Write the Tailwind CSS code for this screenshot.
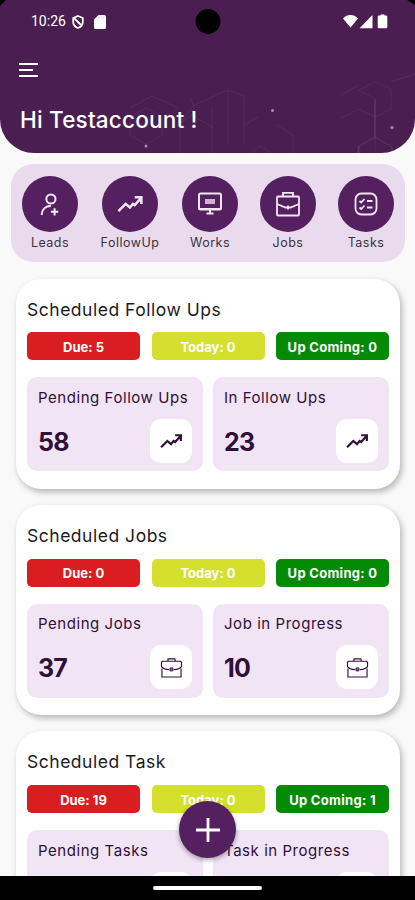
<!DOCTYPE html>
<html lang="en">
<head>
<meta charset="utf-8">
<meta name="viewport" content="width=device-width, initial-scale=1">
<title>Dashboard</title>
<script src="https://cdn.jsdelivr.net/npm/@tailwindcss/browser@4"></script>
</head>
<body class="bg-black font-['Inter',sans-serif]">
<svg class="hidden">
  <symbol id="trend" viewBox="0 0 24 24"><path d="M2 17.500 8 11.500l3.500 3 2.500-3 1.500 1L20.500 7M15.500 6H21v5.500" fill="none" stroke="currentColor" stroke-width="2.100"/></symbol>
  <symbol id="case" viewBox="0 0 24 22"><path d="M2 12v9h20v-9M9.500 13.200C6 13 3 12 1.500 10V5.500l1-1h19l1 1V10c-1.500 2-4.500 3-8 3.200M8 4.500l.5-2.500h7l.5 2.500" fill="none" stroke="currentColor" stroke-width="1.200"/><path d="M10.500 11.500h3v3h-3z" fill="#8d8094" stroke="currentColor"/></symbol>
</svg>
<div class="relative flex h-[900px] w-[415px] flex-col overflow-hidden bg-[#f9f9f9]">
  <header class="relative h-[153px] shrink-0 overflow-hidden rounded-b-[34px] bg-[#4b1e52] text-white">
    <svg class="absolute inset-0" width="415" height="153" fill="none" stroke="#9a6da0" stroke-opacity=".16">
      <path d="M0 0h6L0 6zM415 0h-8l8 5z" fill="#000" stroke="none"/>
      <path d="M130 132v-15l16-9 16 9v18l-16 9-16-9zM130 108l22-12 26 12M180 153v-30l12-8 20 12v26M180 123l14-18 34-15 16 6v47M228 90v54M212 108v20M244 125l14-8M190 97l4 9M277 125l16 10v18M341 118l18-9 16 8v36M375 99v18l16-8V89l-16-7-16 8zM251 153l9-7 11 7M341 95l18-10M391 82l24-8"/>
      <path d="M359 153v-6M375 137l-17 10v6M375 137l17 10v6M375 137v-38" stroke-opacity=".3"/>
      <g fill="#a888ac" stroke="none"><circle cx="146" cy="146" r="1.500"/><circle cx="272.500" cy="110.500" r="1.500"/><circle cx="392" cy="127.500" r="1.500"/></g>
    </svg>
    <div class="relative flex h-[43px] items-center pl-[31px] pr-[27px]">
      <span class="w-[36px] whitespace-nowrap font-['Roboto',sans-serif] text-[14px] font-normal">10:26</span>
      <svg class="ml-[5px]" width="12" height="14" viewBox="0 0 12 14" fill="none" stroke="white" stroke-width="1.800"><path d="M6 1l4.800 2v4c0 3-2 5-4.800 6-2.800-1-4.800-3-4.800-6V3zM2.500 3.500l7 7"/></svg>
      <svg class="ml-[10px]" width="12" height="14" viewBox="0 0 12 14"><path d="M4.500 0H10a2 2 0 0 1 2 2v10.500a1.500 1.500 0 0 1-1.500 1.500h-9A1.500 1.500 0 0 1 0 12.500V4.500z" fill="white"/><path d="M5 1.500v2M7.300 1.500v2M9.600 1.500v2" stroke="#d6c9d8"/></svg>
      <svg class="ml-auto" width="46" height="15" viewBox="0 0 46 15" fill="white"><path d="M1 4.500C5-.1 12-.1 16 4.500L8.500 13.500zM17.500 14.200 30.500 1v13.200zM38.500 1.500V.5h4v1h1.500a1.300 1.300 0 0 1 1.300 1.300v10.100a1.300 1.300 0 0 1-1.300 1.300h-7a1.300 1.300 0 0 1-1.300-1.300V2.800A1.300 1.300 0 0 1 37 1.500z"/></svg>
    </div>
    <div class="absolute left-1/2 top-[9px] size-[25px] -translate-x-1/2 rounded-full bg-black"></div>
    <div class="relative flex flex-col gap-[4px] pl-[19px] pt-[20px]">
      <i class="h-[2px] w-[19px] bg-white"></i><i class="h-[2px] w-[14px] bg-white"></i><i class="h-[2px] w-[19px] bg-white"></i>
    </div>
    <h1 class="relative whitespace-nowrap pl-[20px] pt-[27px] text-[22.500px] font-medium leading-[32px] tracking-[0.200px]">Hi Testaccount !</h1>
  </header>

  <nav class="ml-[11px] mt-[11px] flex h-[98px] w-[394px] shrink-0 rounded-[22px] bg-[#e9dbed] pl-[8px] pt-[12px] text-[12.500px] tracking-[0.500px] text-[#39343c]">
    <div class="mr-[18px] flex w-[62px] flex-col items-center"><div class="flex size-[56px] items-center justify-center rounded-full bg-[#54205f] text-[#f3e6f5]"><svg width="22" height="25" viewBox="0 0 24 26" fill="none" stroke="currentColor" stroke-width="2.200"><circle cx="13" cy="7" r="5"/><path d="M3 24.500c0-6 4-10 10-10M17 17v8M13 21h8"/></svg></div><span class="mt-[2px] leading-[18px]">Leads</span></div>
    <div class="mr-[18px] flex w-[62px] flex-col items-center"><div class="flex size-[56px] items-center justify-center rounded-full bg-[#54205f] text-[#f3e6f5]"><svg width="29" height="29"><use href="#trend"/></svg></div><span class="mt-[2px] leading-[18px]">FollowUp</span></div>
    <div class="mr-[16px] flex w-[62px] flex-col items-center"><div class="flex size-[56px] items-center justify-center rounded-full bg-[#54205f] text-[#f3e6f5]"><svg width="26" height="24" viewBox="0 0 26 24" fill="none" stroke="currentColor" stroke-width="2"><rect x="2" y="1.500" width="22" height="16" rx="1.500"/><path d="M8 7h10v5H8z" fill="currentColor" fill-opacity=".75" stroke="none"/><path d="M9.500 21.500h7M13 18v3M3 17h20"/></svg></div><span class="mt-[2px] leading-[18px]">Works</span></div>
    <div class="mr-[16px] flex w-[62px] flex-col items-center"><div class="flex size-[56px] items-center justify-center rounded-full bg-[#54205f] text-[#f3e6f5]"><svg width="26" height="26" viewBox="0 0 26 26" fill="none" stroke="currentColor" stroke-width="1.800"><rect x="2" y="5.500" width="22" height="19" rx="1"/><path d="M8 5.500V1.800h10v3.700M2 13l8.500 3.500h5L24 13M13 14.500v4"/></svg></div><span class="mt-[2px] leading-[18px]">Jobs</span></div>
    <div class="flex w-[62px] flex-col items-center"><div class="flex size-[56px] items-center justify-center rounded-full bg-[#54205f] text-[#f3e6f5]"><svg width="24" height="24" viewBox="0 0 24 24" fill="none" stroke="currentColor" stroke-width="1.800"><rect x="1.500" y="1.500" width="21" height="21" rx="6"/><path d="M5.500 9l1.700 1.500L10.500 7M5.500 15.500L7.200 17l3.300-3.500M13 9h5.500M13 15.500h5.500"/></svg></div><span class="mt-[2px] leading-[18px]">Tasks</span></div>
  </nav>

  <main class="ml-[16px] mt-[17px] flex w-[384px] flex-col gap-[16px]">
    <section class="h-[210px] shrink-0 rounded-[25px] bg-white px-[11px] pt-[17px] shadow-[2px_3px_6px_rgba(0,0,0,0.28)]">
      <h2 class="text-[17.500px] leading-[28px] tracking-[0.520px] text-[#1d1a1e]">Scheduled Follow Ups</h2>
      <div class="mt-[8px] flex justify-between text-center text-[13px] font-bold leading-[30px] text-white">
        <span class="h-[28px] w-[113px] rounded-[5px] bg-[#d91d20]">Due: 5</span><span class="h-[28px] w-[113px] rounded-[5px] bg-[#d5df2d]">Today: 0</span><span class="h-[28px] w-[113px] rounded-[5px] bg-[#058a05] tracking-[0.300px]">Up Coming: 0</span>
      </div>
      <div class="mt-[17px] flex gap-[10px] text-[#301039]">
        <div class="h-[94px] w-[176px] rounded-[10px] bg-[#f1e4f4] px-[11px] pt-[10px]"><p class="whitespace-nowrap text-[15px] leading-[22px] tracking-[0.550px]">Pending Follow Ups</p><div class="mt-[10px] flex items-center justify-between"><b class="pt-[4px] text-[25px] font-bold tracking-[-0.800px]">58</b><span class="flex h-[44px] w-[42px] items-center justify-center rounded-[11px] bg-white"><svg width="25" height="25"><use href="#trend"/></svg></span></div></div>
        <div class="h-[94px] w-[176px] rounded-[10px] bg-[#f1e4f4] px-[11px] pt-[10px]"><p class="whitespace-nowrap text-[15px] leading-[22px] tracking-[0.550px]">In Follow Ups</p><div class="mt-[10px] flex items-center justify-between"><b class="pt-[4px] text-[25px] font-bold tracking-[-0.800px]">23</b><span class="flex h-[44px] w-[42px] items-center justify-center rounded-[11px] bg-white"><svg width="25" height="25"><use href="#trend"/></svg></span></div></div>
      </div>
    </section>
    <section class="h-[210px] shrink-0 rounded-[25px] bg-white px-[11px] pt-[17px] shadow-[2px_3px_6px_rgba(0,0,0,0.28)]">
      <h2 class="text-[17.500px] leading-[28px] tracking-[0.520px] text-[#1d1a1e]">Scheduled Jobs</h2>
      <div class="mt-[9px] flex justify-between text-center text-[13px] font-bold leading-[28px] text-white">
        <span class="h-[28px] w-[113px] rounded-[5px] bg-[#d91d20]">Due: 0</span><span class="h-[28px] w-[113px] rounded-[5px] bg-[#d5df2d]">Today: 0</span><span class="h-[28px] w-[113px] rounded-[5px] bg-[#058a05] tracking-[0.300px]">Up Coming: 0</span>
      </div>
      <div class="mt-[17px] flex gap-[10px] text-[#301039]">
        <div class="h-[94px] w-[176px] rounded-[10px] bg-[#f1e4f4] px-[11px] pt-[9px]"><p class="whitespace-nowrap text-[15px] leading-[22px] tracking-[0.550px]">Pending Jobs</p><div class="mt-[10px] flex items-center justify-between"><b class="pt-[4px] text-[25px] font-bold tracking-[-0.800px]">37</b><span class="flex h-[44px] w-[42px] items-center justify-center rounded-[11px] bg-white"><svg width="23" height="21"><use href="#case"/></svg></span></div></div>
        <div class="h-[94px] w-[176px] rounded-[10px] bg-[#f1e4f4] px-[11px] pt-[9px]"><p class="whitespace-nowrap text-[15px] leading-[22px] tracking-[0.550px]">Job in Progress</p><div class="mt-[10px] flex items-center justify-between"><b class="pt-[4px] text-[25px] font-bold tracking-[-0.800px]">10</b><span class="flex h-[44px] w-[42px] items-center justify-center rounded-[11px] bg-white"><svg width="23" height="21"><use href="#case"/></svg></span></div></div>
      </div>
    </section>
    <section class="h-[210px] shrink-0 rounded-[25px] bg-white px-[11px] pt-[17px] shadow-[2px_3px_6px_rgba(0,0,0,0.28)]">
      <h2 class="text-[17.500px] leading-[28px] tracking-[0.520px] text-[#1d1a1e]">Scheduled Task</h2>
      <div class="mt-[9px] flex justify-between text-center text-[13px] font-bold leading-[30px] text-white">
        <span class="h-[28px] w-[113px] rounded-[5px] bg-[#d91d20]">Due: 19</span><span class="h-[28px] w-[113px] rounded-[5px] bg-[#d5df2d]">Today: 0</span><span class="h-[28px] w-[113px] rounded-[5px] bg-[#058a05] tracking-[0.300px]">Up Coming: 1</span>
      </div>
      <div class="mt-[17px] flex gap-[10px] text-[#301039]">
        <div class="h-[94px] w-[176px] rounded-[10px] bg-[#f1e4f4] px-[11px] pt-[10px]"><p class="whitespace-nowrap text-[15px] leading-[22px] tracking-[0.550px]">Pending Tasks</p><div class="mt-[10px] flex justify-end"><span class="h-[44px] w-[42px] rounded-[11px] bg-white"></span></div></div>
        <div class="h-[94px] w-[176px] rounded-[10px] bg-[#f1e4f4] px-[11px] pt-[10px]"><p class="whitespace-nowrap text-[15px] leading-[22px] tracking-[0.550px]">Task in Progress</p><div class="mt-[10px] flex justify-end"><span class="h-[44px] w-[42px] rounded-[11px] bg-white"></span></div></div>
      </div>
    </section>
  </main>

  <button class="absolute left-[179px] top-[801px] flex size-[57px] items-center justify-center rounded-full bg-[#54205f] shadow-[0_2px_5px_rgba(0,0,0,0.35)]"><svg width="24" height="24" stroke="white" stroke-width="2.800"><path d="M12 0v24M0 12h24"/></svg></button>
  <div class="absolute bottom-0 left-0 flex h-[24px] w-full items-center justify-center bg-black"><i class="h-[4px] w-[109px] rounded-full bg-white"></i></div>
</div>
</body>
</html>
